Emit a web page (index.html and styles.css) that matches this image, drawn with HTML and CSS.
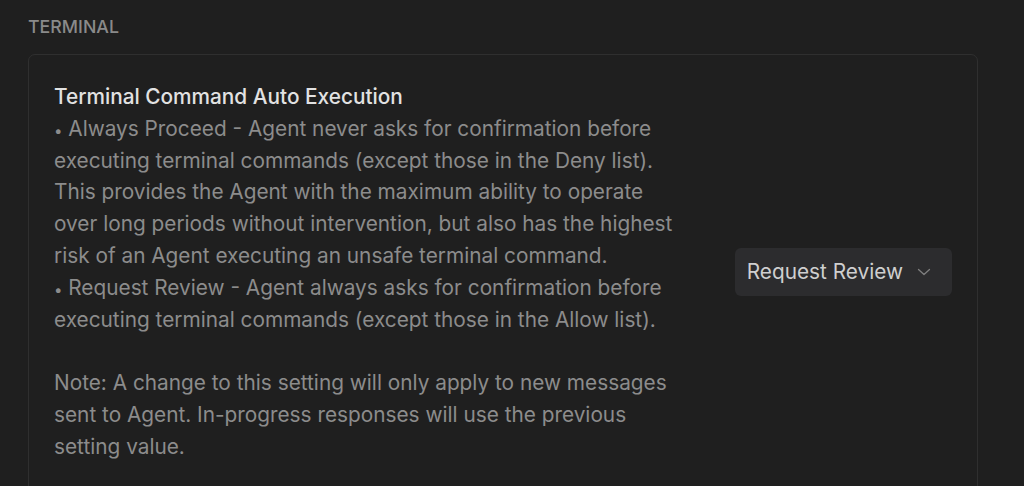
FILE: index.html
```html
<!DOCTYPE html>
<html lang="en">
<head>
    <meta charset="UTF-8">
    <meta name="viewport" content="width=device-width, initial-scale=1.0">
    <title>Settings - Terminal</title>
    <link rel="stylesheet" href="styles.css">
</head>
<body>

<div class="section">
    <h3 class="section-title">TERMINAL</h3>
    <div class="card">
        <div class="setting">
            <div class="setting-text">
                <div class="setting-name">Terminal Command Auto Execution</div>
                <div class="setting-desc">
                    <p><span class="bullet">•</span> Always Proceed - Agent never asks for confirmation before executing terminal commands (except those in the Deny list). This provides the Agent with the maximum ability to operate over long periods without intervention, but also has the highest risk of an Agent executing an unsafe terminal command.</p>
                    <p><span class="bullet">•</span> Request Review - Agent always asks for confirmation before executing terminal commands (except those in the Allow list).</p>
                    <p class="note">Note: A change to this setting will only apply to new messages sent to Agent. In-progress responses will use the previous setting value.</p>
                </div>
            </div>
            <button class="select">
                <span>Request Review</span>
                <svg class="chevron" width="14" height="14" viewBox="0 0 14 14" fill="none">
                    <path d="M1.5 4.5 L7 9.5 L12.5 4.5" stroke="currentColor" stroke-width="1.3" stroke-linecap="round" stroke-linejoin="round"/>
                </svg>
            </button>
        </div>
    </div>
</div>

</body>
</html>
```

FILE: styles.css
```css
body {
    margin: 0;
    font-family: "Inter", "Noto Sans", sans-serif;
    background-color: #1f1f1f;
    color: #8c8c8c;
}
.section {
    padding: 16px 46px 0 28px;
}
.section-title {
    margin: 0 0 16px;
    font-size: 17.8px;
    font-weight: 500;
    color: #8a8a8a;
    line-height: 22px;
}
.card {
    border: 1px solid #2f2f2f;
    border-radius: 7px;
    padding: 26px 25px 40px 25px;
}
.setting {
    display: flex;
    align-items: center;
    justify-content: space-between;
    gap: 40px;
}
.setting-text {
    max-width: 628px;
    font-size: 20.8px;
    line-height: 31.8px;
}
.setting-name {
    font-weight: 500;
    color: #e2e2e2;
}
.setting-desc p {
    margin: 0;
}
.setting-desc .note {
    margin-top: 31.8px;
}
.bullet {
    font-size: 15px;
    line-height: 1;
}
.select {
    display: flex;
    align-items: center;
    gap: 14px;
    height: 48px;
    padding: 0 21px 0 12px;
    border: none;
    border-radius: 6px;
    background-color: #2c2c2e;
    color: #cfcfcf;
    font-family: inherit;
    font-size: 20.8px;
}
.chevron {
    color: #7f7f7f;
}
```
